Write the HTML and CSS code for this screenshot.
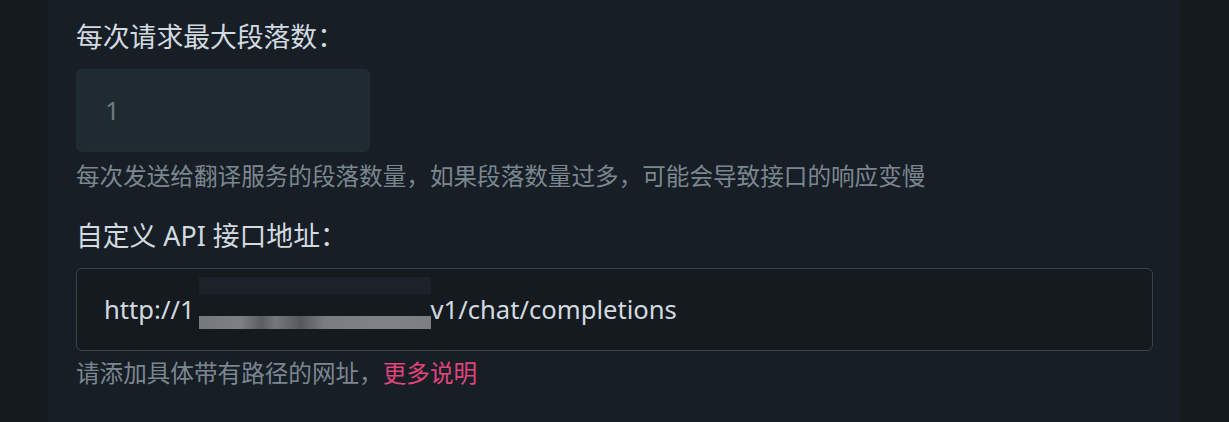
FILE: index.html
```html
<!DOCTYPE html>
<html lang="zh-CN">
<head>
    <meta charset="UTF-8">
    <meta name="viewport" content="width=device-width, initial-scale=1.0">
    <title>翻译服务设置</title>
    <link rel="stylesheet" href="styles.css">
</head>
<body>
    <div class="panel">
        <div class="field">
            <label class="field-label" for="max-paragraphs">每次请求最大段落数：</label>
            <input id="max-paragraphs" class="input input-small" type="text" placeholder="1">
            <p class="field-help">每次发送给翻译服务的段落数量，如果段落数量过多，可能会导致接口的响应变慢</p>
        </div>
        <div class="field">
            <label class="field-label" for="api-url">自定义 API 接口地址：</label>
            <div class="input input-wide">
                <span class="url-text">http://1<span class="blurred"><span class="blur-top"></span><span class="blur-bottom"></span></span>v1/chat/completions</span>
            </div>
            <p class="field-help field-help-last">请添加具体带有路径的网址，<a href="#" class="help-link">更多说明</a></p>
        </div>
    </div>
</body>
</html>
```

FILE: styles.css
```css
body {
    margin: 0;
    background-color: #151a1e;
    font-family: "Noto Sans", "Noto Sans CJK SC", sans-serif;
    height: 422px;
    overflow: hidden;
}

.panel {
    margin-left: 48px;
    width: 1132px;
    height: 422px;
    background-color: #181e26;
    padding: 16px 28px 0 28px;
    box-sizing: border-box;
}

.field-label {
    display: block;
    color: #d2dae0;
    font-size: 26.8px;
    line-height: 42px;
    margin-bottom: 11px;
}

.input {
    box-sizing: border-box;
    height: 83px;
    border-radius: 6px;
    font-family: "Noto Sans", sans-serif;
    font-size: 25.6px;
}

.input-small {
    display: block;
    width: 294px;
    background-color: #202a33;
    border: 1px solid #222c35;
    padding: 0 28px;
    color: #d2dae0;
    outline: none;
}

.input-small::placeholder {
    color: #6d7a84;
}

.input-wide {
    width: 1077px;
    background-color: #151a1f;
    border: 1px solid #3a444d;
    display: flex;
    align-items: center;
    padding: 0 27px;
}

.url-text {
    color: #d2dae0;
    white-space: nowrap;
    display: flex;
    align-items: center;
}

.blurred {
    display: inline-flex;
    flex-direction: column;
    justify-content: space-between;
    width: 232px;
    height: 52px;
    margin-bottom: 13px;
    margin-left: 4px;
}

.blur-top {
    height: 17px;
    background-color: #1b2229;
}

.blur-bottom {
    height: 13px;
    background: linear-gradient(90deg, #76797c 0%, #7d8083 18%, #5a5e61 27%, #75787b 33%, #55595c 44%, #7a7d80 54%, #808386 80%, #7c7f82 100%);
}

.field-help {
    margin: 7px 0 22px 0;
    color: #7b8790;
    font-size: 23.6px;
    line-height: 34px;
}

.field-help-last {
    margin-top: 5px;
}

.help-link {
    color: #e0457b;
    text-decoration: none;
}
```
